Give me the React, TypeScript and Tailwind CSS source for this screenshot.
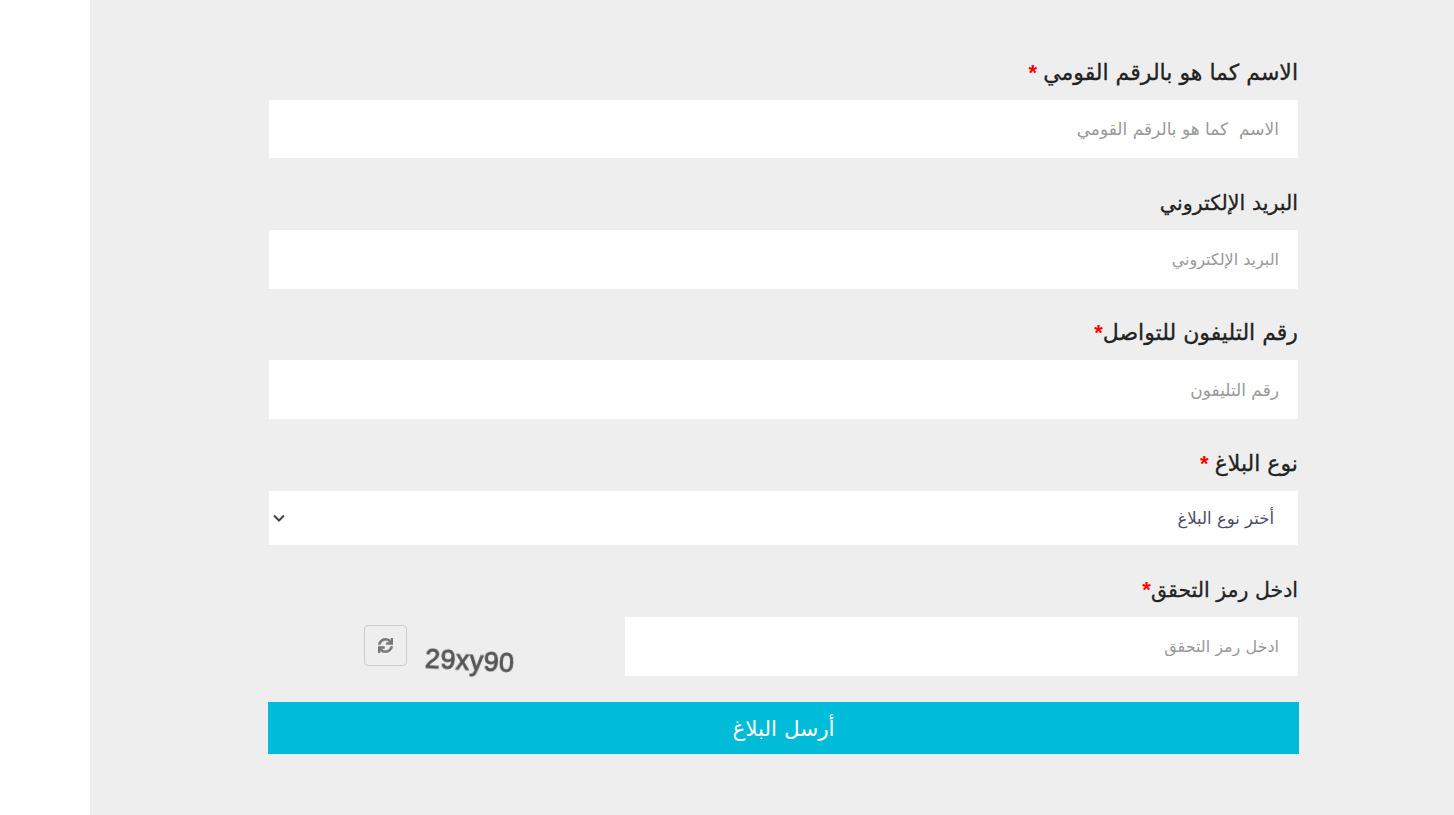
import { FaSync } from "react-icons/fa";

const font = { fontFamily: '"DejaVu Sans", sans-serif' };

function Star({ children }: { children: string }) {
  return (
    <span
      className="text-[22px] font-bold text-[#f00] [-webkit-text-stroke:0]"
      style={{ fontFamily: '"Liberation Sans", sans-serif' }}
    >
      {children}
    </span>
  );
}

function Field({ placeholder, className }: { placeholder: string; className: string }) {
  return (
    <input
      dir="rtl"
      placeholder={placeholder}
      className={`block w-full bg-white px-[19px] outline-none placeholder:text-[#999] ${className}`}
    />
  );
}

const labelClass = "block h-[28px] leading-[30px] text-[#222] [-webkit-text-stroke:0.3px_#222]";

export default function App() {
  return (
    <div dir="rtl" className="h-[815px] overflow-hidden bg-white pl-[90px]" style={font}>
      <div className="h-full bg-[#eeeeee] pt-[57.8px] pr-[156px] pl-[179px]">
        <label className={`${labelClass} text-[22px]`}>
          الاسم كما هو بالرقم القومي<Star> *</Star>
        </label>
        <div className="mt-[14px] mb-[29.7px]">
          <Field placeholder="الاسم  كما هو بالرقم القومي" className="h-[58.6px] text-[17px]" />
        </div>
        <label className={`${labelClass} text-[20.6px]`}>البريد الإلكتروني</label>
        <div className="mt-[14px] mb-[29.7px]">
          <Field placeholder="البريد الإلكتروني" className="h-[58.6px] text-[16px]" />
        </div>
        <label className={`${labelClass} text-[22px]`}>
          رقم التليفون للتواصل<Star>*</Star>
        </label>
        <div className="mt-[14px] mb-[29.7px]">
          <Field placeholder="رقم التليفون" className="h-[58.6px] text-[17px]" />
        </div>
        <label className={`${labelClass} text-[22px]`}>
          نوع البلاغ<Star> *</Star>
        </label>
        <div className="mt-[14px] mb-[29.9px] flex h-[54.3px] items-center justify-between bg-white pr-[24px] pl-[3px]">
          <span className="pt-[3px] text-[16.5px] text-[#4a4a66]">أختر نوع البلاغ</span>
          <svg width="14" height="14" viewBox="0 0 14 14" fill="none" stroke="#444" strokeWidth="2">
            <path d="M2 4.5l5 5 5-5" />
          </svg>
        </div>
        <label className={`${labelClass} text-[20.5px]`}>
          ادخل رمز التحقق<Star>*</Star>
        </label>
        <div className="mt-[14px] flex items-start">
          <div className="w-[673px] shrink-0">
            <Field placeholder="ادخل رمز التحقق" className="h-[59px] text-[16px]" />
          </div>
          <div
            className="mt-[29px] mr-[109px] w-[91px] rotate-[3deg] text-[27px] leading-[30px] tracking-[0.4px] text-[#555] blur-[0.4px] [-webkit-text-stroke:0.9px_#555]"
            dir="ltr"
            style={{ fontFamily: '"Liberation Sans", sans-serif' }}
          >
            29xy90
          </div>
          <button className="mt-[8px] mr-[18px] flex h-[41px] w-[43px] items-center justify-center rounded-[4px] border border-[#ccc] bg-[#eee] text-[#777]">
            <FaSync size={15} stroke="currentColor" strokeWidth={20} />
          </button>
        </div>
        <button className="mt-[26px] -mx-px block h-[52px] w-[1031px] bg-[#00bcd9] pt-[2px] text-[21.5px] text-white">
          أرسل البلاغ
        </button>
      </div>
    </div>
  );
}
